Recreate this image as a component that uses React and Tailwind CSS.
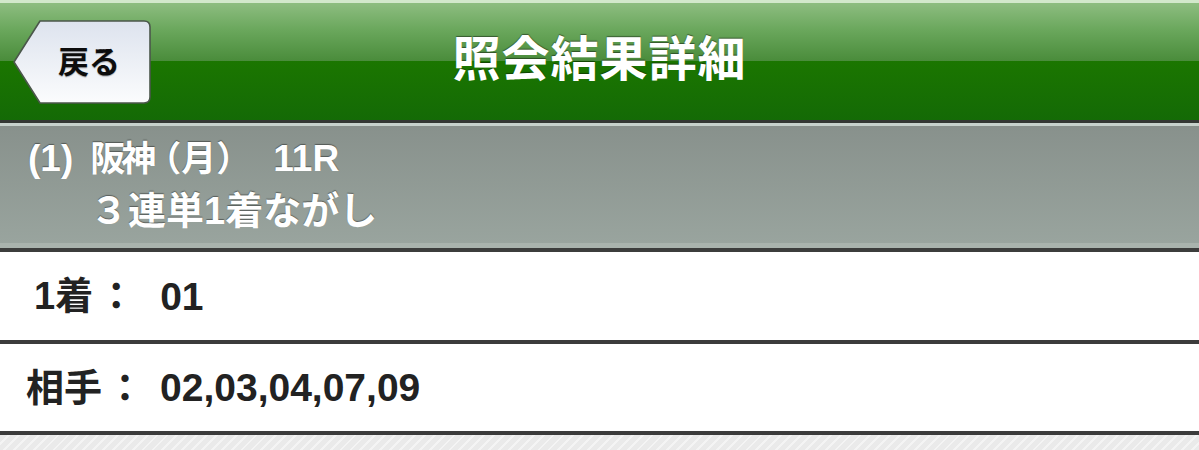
const BackButton = () => {
  return (
    <button className="absolute left-[12px] top-[19px] w-[140px] h-[86px] flex items-center">
      <svg className="absolute inset-0" width="140" height="86" viewBox="0 0 140 86">
        <defs>
          <linearGradient id="backFill" x1="0" y1="0" x2="0" y2="1">
            <stop offset="0" stopColor="#dde3ee" />
            <stop offset="1" stopColor="#fbfcfd" />
          </linearGradient>
        </defs>
        <path
          d="M28,2 H132 Q138,2 138,8 V78 Q138,84 132,84 H28 L2,43 Z"
          fill="url(#backFill)"
          stroke="#4b574b"
          strokeWidth="1.6"
          strokeLinejoin="round"
        />
      </svg>
      <span className="relative pl-[46px] text-[31px] font-bold leading-none text-[#0d0d0d] [text-shadow:0_1px_1px_rgba(0,0,0,0.3)]">
        戻る
      </span>
    </button>
  );
};

const App = () => {
  return (
    <div className="w-full h-[450px] overflow-hidden font-['Liberation_Sans','Noto_Sans_CJK_JP',sans-serif] bg-[repeating-linear-gradient(135deg,#eaeaea_0px,#eaeaea_5px,#f4f4f4_5px,#f4f4f4_7px)]">
      {/* Nav bar */}
      <header className="relative h-[123px] border-b-[3px] border-[#343834] bg-[linear-gradient(to_bottom,#d2e8cb_0px,#d2e8cb_3px,#8dbd80_3px,#6aa75c_30px,#4a8c3b_61px,#1b7600_61px,#146a06_120px)] flex items-center justify-center">
        <BackButton />
        <h1 className="text-[48px] font-bold leading-none text-white tracking-[1px] [text-shadow:0_-1px_1px_rgba(0,0,0,0.45)]">
          照会結果詳細
        </h1>
      </header>

      {/* Race summary */}
      <div className="h-[129px] border-t-[3px] border-t-[#c7d2cc] border-b-[4px] border-b-[#3c3d3c] bg-[linear-gradient(to_bottom,#88918c_0%,#99a49e_96%,#a9b3ad_96%)] pt-[7px] pl-[28px] font-bold leading-[52px] text-white [text-shadow:0_-1px_1px_rgba(0,0,0,0.4)]">
        <div className="flex items-center">
          <span className="text-[37px]">(1)</span>
          <span className="ml-[17px] text-[35px] tracking-[-4px]">阪神</span>
          <span className="ml-[-6px] text-[35px]">（月）</span>
          <span className="ml-[22px] text-[37px]">11R</span>
        </div>
        <div className="pl-[62px] text-[38px]">３連単1着ながし</div>
      </div>

      {/* Detail rows */}
      <div className="bg-white text-[#222] text-[38px] font-bold leading-none">
        <div className="h-[92px] flex items-center border-b-[4px] border-[#3c3c3c]">
          <span className="pl-[34px]">1着</span>
          <span className="ml-[4px]">：</span>
          <span className="ml-[25px] text-[39px]">01</span>
        </div>
        <div className="h-[91px] flex items-center border-b-[4px] border-[#3c3c3c]">
          <span className="pl-[26px]">相手</span>
          <span className="ml-[4px]">：</span>
          <span className="ml-[16px] text-[39px]">02,03,04,07,09</span>
        </div>
      </div>
    </div>
  );
};

export default App;
